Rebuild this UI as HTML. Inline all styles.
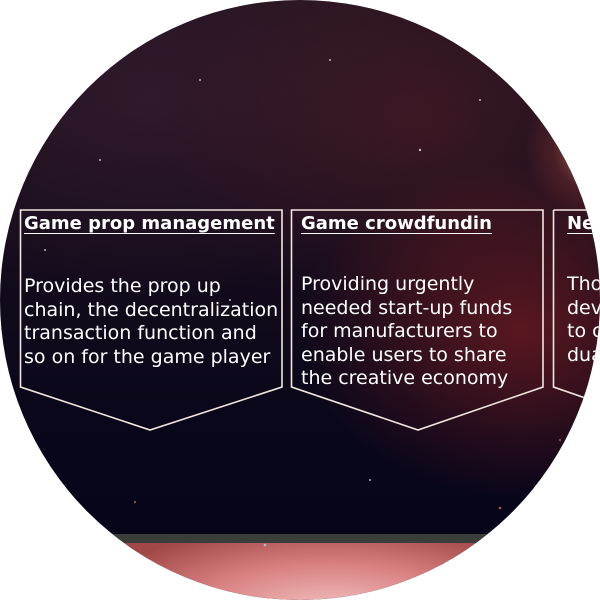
<!DOCTYPE html>
<html><head><meta charset="utf-8"><style>
html,body{margin:0;padding:0;background:#fff;width:600px;height:600px;overflow:hidden}
.c{position:absolute;left:0;top:0;width:600px;height:600px;border-radius:50%;overflow:hidden;
background:
radial-gradient(ellipse 70px 70px at 595px 150px, rgba(220,140,100,.7), rgba(150,60,55,.3) 60%, transparent 100%),
radial-gradient(ellipse 220px 170px at 520px 330px, rgba(150,35,35,.55), transparent 100%),
radial-gradient(ellipse 250px 200px at 420px 120px, rgba(90,30,40,.5), transparent 100%),
radial-gradient(ellipse 300px 200px at 150px 100px, rgba(60,30,50,.6), transparent 100%),
linear-gradient(180deg,#221420 0%,#150c1c 40%,#08061a 75%,#060418 100%);}
.band{position:absolute;left:0;top:534px;width:600px;height:9px;background:#3b3d3b}
.pink{position:absolute;left:0;top:543px;width:600px;height:60px;background:radial-gradient(ellipse 250px 90px at 330px 70px,#f4c4c4,#d88080 55%,#a04848 100%)}
svg{position:absolute;left:0;top:0}
.t{position:absolute;color:#fff;font-family:"DejaVu Sans","Liberation Sans",sans-serif;white-space:nowrap}
.h{font-weight:bold;font-size:18px;text-decoration:underline;text-underline-offset:4px;text-decoration-thickness:1px;top:213px}
.b{font-size:19px;line-height:23.5px;top:273px}
</style></head><body>
<div class="c">
<div class="band"></div><div class="pink"></div>
<svg width="600" height="600">
<g fill="none" stroke="#f2e6e0" stroke-width="1.6">
<path d="M20.5 210 H282 V387 L150 430 L20.5 387 Z"/>
<path d="M291.5 210 H543 V387 L418 430 L291.5 387 Z"/>
<path d="M553.5 210 H620 M553.5 210 V387 L620 410"/>
</g>
<g fill="#fff" opacity=".7">
<circle cx="45" cy="250" r="1"/><circle cx="200" cy="80" r="1"/><circle cx="330" cy="60" r="1"/><circle cx="420" cy="150" r="1.2"/><circle cx="265" cy="545" r="1.3" fill="#9ee"/><circle cx="135" cy="502" r="1" fill="#e96"/><circle cx="500" cy="508" r="1.2" fill="#f86"/><circle cx="100" cy="160" r="1"/><circle cx="480" cy="100" r="1"/><circle cx="370" cy="480" r="1"/><circle cx="230" cy="300" r="1"/><circle cx="560" cy="440" r="1" fill="#f86"/>
</g>
</svg>
<div class="t h" style="left:24px">Game prop management</div>
<div class="t h" style="left:301px">Game crowdfundin</div>
<div class="t h" style="left:567px">Ne</div>
<div class="t b" style="left:24px;top:275px">Provides the prop up<br>chain, the decentralization<br>transaction function and<br>so on for the game player</div>
<div class="t b" style="left:301px">Providing urgently<br>needed start-up funds<br>for manufacturers to<br>enable users to share<br>the creative economy</div>
<div class="t b" style="left:567px">Tho<br>dev<br>to c<br>dua</div>
</div>
</body></html>
